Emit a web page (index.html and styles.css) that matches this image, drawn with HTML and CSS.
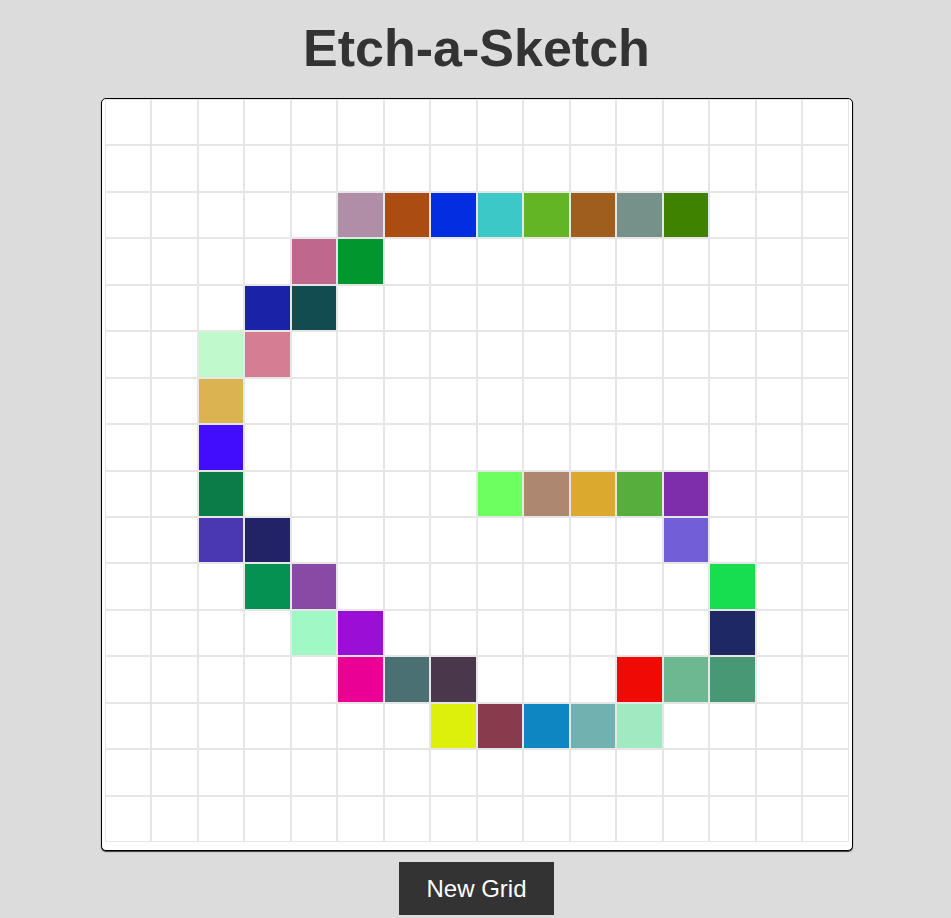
FILE: index.html
```html
<!DOCTYPE html>
<html lang="en">
<head>
<meta charset="utf-8">
<title>Etch-a-Sketch</title>
<link rel="stylesheet" href="styles.css">
</head>
<body>
<main class="page">
<h1 class="title">Etch-a-Sketch</h1>
<div class="board">
<div class="c"></div><div class="c"></div><div class="c"></div><div class="c"></div><div class="c"></div><div class="c"></div><div class="c"></div><div class="c"></div><div class="c"></div><div class="c"></div><div class="c"></div><div class="c"></div><div class="c"></div><div class="c"></div><div class="c"></div><div class="c"></div>
<div class="c"></div><div class="c"></div><div class="c"></div><div class="c"></div><div class="c"></div><div class="c"></div><div class="c"></div><div class="c"></div><div class="c"></div><div class="c"></div><div class="c"></div><div class="c"></div><div class="c"></div><div class="c"></div><div class="c"></div><div class="c"></div>
<div class="c"></div><div class="c"></div><div class="c"></div><div class="c"></div><div class="c"></div><div class="c" style="background:#b08ea8"></div><div class="c" style="background:#ab4d12"></div><div class="c" style="background:#032de0"></div><div class="c" style="background:#3cc8c6"></div><div class="c" style="background:#63b526"></div><div class="c" style="background:#9f5e1e"></div><div class="c" style="background:#769189"></div><div class="c" style="background:#3f8200"></div><div class="c"></div><div class="c"></div><div class="c"></div>
<div class="c"></div><div class="c"></div><div class="c"></div><div class="c"></div><div class="c" style="background:#bf678c"></div><div class="c" style="background:#02962e"></div><div class="c"></div><div class="c"></div><div class="c"></div><div class="c"></div><div class="c"></div><div class="c"></div><div class="c"></div><div class="c"></div><div class="c"></div><div class="c"></div>
<div class="c"></div><div class="c"></div><div class="c"></div><div class="c" style="background:#1a23a8"></div><div class="c" style="background:#134c50"></div><div class="c"></div><div class="c"></div><div class="c"></div><div class="c"></div><div class="c"></div><div class="c"></div><div class="c"></div><div class="c"></div><div class="c"></div><div class="c"></div><div class="c"></div>
<div class="c"></div><div class="c"></div><div class="c" style="background:#bff9cc"></div><div class="c" style="background:#d57d93"></div><div class="c"></div><div class="c"></div><div class="c"></div><div class="c"></div><div class="c"></div><div class="c"></div><div class="c"></div><div class="c"></div><div class="c"></div><div class="c"></div><div class="c"></div><div class="c"></div>
<div class="c"></div><div class="c"></div><div class="c" style="background:#dcb351"></div><div class="c"></div><div class="c"></div><div class="c"></div><div class="c"></div><div class="c"></div><div class="c"></div><div class="c"></div><div class="c"></div><div class="c"></div><div class="c"></div><div class="c"></div><div class="c"></div><div class="c"></div>
<div class="c"></div><div class="c"></div><div class="c" style="background:#420cfd"></div><div class="c"></div><div class="c"></div><div class="c"></div><div class="c"></div><div class="c"></div><div class="c"></div><div class="c"></div><div class="c"></div><div class="c"></div><div class="c"></div><div class="c"></div><div class="c"></div><div class="c"></div>
<div class="c"></div><div class="c"></div><div class="c" style="background:#0b7b47"></div><div class="c"></div><div class="c"></div><div class="c"></div><div class="c"></div><div class="c"></div><div class="c" style="background:#6dff60"></div><div class="c" style="background:#ad876f"></div><div class="c" style="background:#dca92f"></div><div class="c" style="background:#58ae3c"></div><div class="c" style="background:#7e2eaa"></div><div class="c"></div><div class="c"></div><div class="c"></div>
<div class="c"></div><div class="c"></div><div class="c" style="background:#4a37b2"></div><div class="c" style="background:#212366"></div><div class="c"></div><div class="c"></div><div class="c"></div><div class="c"></div><div class="c"></div><div class="c"></div><div class="c"></div><div class="c"></div><div class="c" style="background:#725fd8"></div><div class="c"></div><div class="c"></div><div class="c"></div>
<div class="c"></div><div class="c"></div><div class="c"></div><div class="c" style="background:#049152"></div><div class="c" style="background:#884aa4"></div><div class="c"></div><div class="c"></div><div class="c"></div><div class="c"></div><div class="c"></div><div class="c"></div><div class="c"></div><div class="c"></div><div class="c" style="background:#17de50"></div><div class="c"></div><div class="c"></div>
<div class="c"></div><div class="c"></div><div class="c"></div><div class="c"></div><div class="c" style="background:#a0f8c4"></div><div class="c" style="background:#9a0ed6"></div><div class="c"></div><div class="c"></div><div class="c"></div><div class="c"></div><div class="c"></div><div class="c"></div><div class="c"></div><div class="c" style="background:#1d2865"></div><div class="c"></div><div class="c"></div>
<div class="c"></div><div class="c"></div><div class="c"></div><div class="c"></div><div class="c"></div><div class="c" style="background:#eb0095"></div><div class="c" style="background:#4b7073"></div><div class="c" style="background:#4b374c"></div><div class="c"></div><div class="c"></div><div class="c"></div><div class="c" style="background:#f00a05"></div><div class="c" style="background:#6db791"></div><div class="c" style="background:#489875"></div><div class="c"></div><div class="c"></div>
<div class="c"></div><div class="c"></div><div class="c"></div><div class="c"></div><div class="c"></div><div class="c"></div><div class="c"></div><div class="c" style="background:#dcf00b"></div><div class="c" style="background:#883b4c"></div><div class="c" style="background:#0e86c2"></div><div class="c" style="background:#71b1b0"></div><div class="c" style="background:#a0e9c1"></div><div class="c"></div><div class="c"></div><div class="c"></div><div class="c"></div>
<div class="c"></div><div class="c"></div><div class="c"></div><div class="c"></div><div class="c"></div><div class="c"></div><div class="c"></div><div class="c"></div><div class="c"></div><div class="c"></div><div class="c"></div><div class="c"></div><div class="c"></div><div class="c"></div><div class="c"></div><div class="c"></div>
<div class="c"></div><div class="c"></div><div class="c"></div><div class="c"></div><div class="c"></div><div class="c"></div><div class="c"></div><div class="c"></div><div class="c"></div><div class="c"></div><div class="c"></div><div class="c"></div><div class="c"></div><div class="c"></div><div class="c"></div><div class="c"></div>
</div>
<button class="new-grid" type="button">New Grid</button>
</main>
</body>
</html>
```

FILE: styles.css
```css
html, body {
  margin: 0;
  padding: 0;
}

body {
  background: #dcdcdc;
  font-family: "Liberation Sans", Arial, sans-serif;
  color: #333333;
  padding-left: 2px;
  overflow: hidden;
}

.page {
  display: flex;
  flex-direction: column;
  align-items: center;
}

.title {
  margin: 18px 0 20px;
  font-size: 52px;
  line-height: 60px;
  font-weight: bold;
  color: #333333;
}

.board {
  box-sizing: border-box;
  width: 752px;
  height: 753px;
  padding: 0 3px 8px 3px;
  background: #ffffff;
  border: 1px solid #000000;
  border-radius: 5px;
  box-shadow: 0 1px 1px rgba(0, 0, 0, 0.75);
  display: grid;
  grid-template-columns: repeat(16, 1fr);
  grid-template-rows: repeat(16, 1fr);
}

.c {
  border: 1px solid #e6e6e6;
  background: #ffffff;
}

.new-grid {
  margin-top: 11px;
  height: 53px;
  padding: 0 27px;
  border: none;
  background: #333333;
  color: #ffffff;
  font-family: "Liberation Sans", Arial, sans-serif;
  font-size: 24px;
}
```
